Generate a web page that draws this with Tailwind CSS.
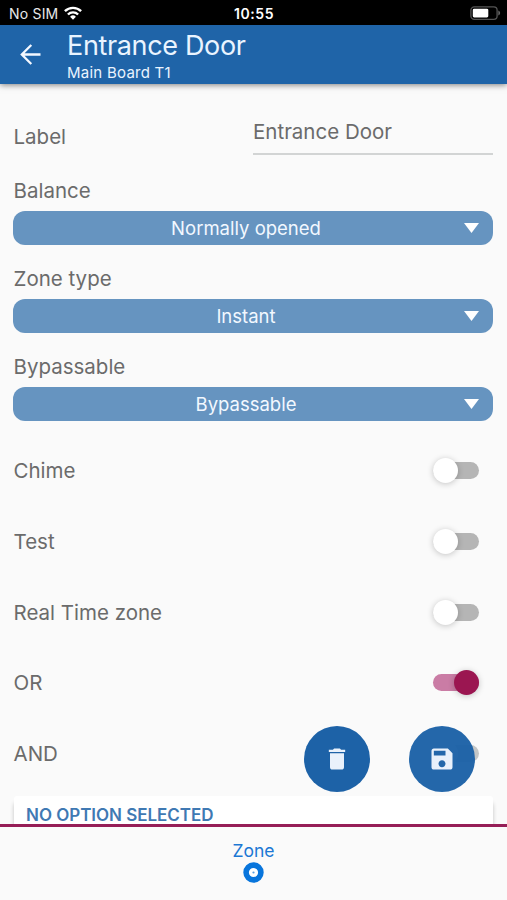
<!DOCTYPE html>
<html lang="en">
<head>
<meta charset="utf-8">
<meta name="viewport" content="width=device-width, initial-scale=1">
<title>Entrance Door</title>
<script src="https://cdn.jsdelivr.net/npm/@tailwindcss/browser@4"></script>
</head>
<body class="bg-[#fafafa] font-[Inter,'Liberation_Sans',sans-serif] text-[#6b6b6b]">
<div class="relative flex h-[900px] w-[507px] flex-col overflow-hidden">
  <div class="grid h-[25px] shrink-0 grid-cols-3 items-center bg-black pt-[3px] text-[14px] leading-none text-[#e8e8e8]">
    <div class="flex items-center gap-[6px] pl-[9px]">
      <span class="whitespace-nowrap tracking-[0.2px]">No SIM</span>
      <svg class="-mt-[2px] h-[14px] w-[18px]" viewBox="0 0 18 14" fill="none" stroke="#fff" stroke-width="2.4"><path d="M.9 5.2a11.6 11.6 0 0 1 16.2 0M3.9 8.5a7.3 7.3 0 0 1 10.2 0"/><path d="M9 13.7 6.1 10.8a4.1 4.1 0 0 1 5.8 0Z" fill="#fff" stroke="none"/></svg>
    </div>
    <div class="pl-px text-center font-semibold tracking-[0.6px] text-white">10:55</div>
    <div class="flex justify-end pr-[6px]">
      <svg class="-mt-[2px] h-[14px] w-[31px]" viewBox="0 0 31 14"><rect x=".9" y=".9" width="26.2" height="12.4" rx="3.4" fill="none" stroke="#555" stroke-width="1.3"/><rect x="2.8" y="2.700" width="15.5" height="8.8" rx="1.4" fill="#fff"/><path d="M28.3 4.6c2.4.7 2.4 4.3 0 5Z" fill="#666"/></svg>
    </div>
  </div>

  <header class="z-10 flex h-[59px] shrink-0 bg-[#1f64a8] text-[#eaf4ff] shadow-[0_1px_6px_rgba(0,0,0,0.5)]">
    <div class="w-[67px] pt-[19px] pl-[20px]">
      <svg class="h-[21px] w-[21px]" viewBox="0 0 21 21" fill="none" stroke="#f4f8ff" stroke-width="2.3"><path d="M20.5 10.5H2M11.3 1 1.8 10.5l9.5 9.5"/></svg>
    </div>
    <div class="pt-[5px]">
      <h1 class="text-[27px] leading-[32px] tracking-[-0.35px]">Entrance Door</h1>
      <p class="pt-px text-[15px] leading-[20px] tracking-[0.25px]">Main Board T1</p>
    </div>
  </header>

  <main class="min-h-0 flex-1 overflow-hidden px-[14px] text-[20.5px] leading-[30px]">
    <div class="flex h-[85px] pt-[32px]">
      <div class="-ml-[0.5px] w-[239.5px] pt-[6px]">Label</div>
      <div class="h-[39px] flex-1 border-b-2 border-[#d2d4d4] pt-px">Entrance Door</div>
    </div>

    <div class="h-[88px]">
      <div class="-ml-[0.5px] h-[42px] pt-[7px]">Balance</div>
      <div class="-ml-px flex h-[34px] items-center rounded-[12px] bg-[#6694c0] pr-[14px] pl-[15px] text-[18.5px] text-[#f2f8ff]"><span class="flex-1 pb-px text-center">Normally opened</span><svg class="h-[10px] w-[15px]" viewBox="0 0 15 10"><path d="M0 0h15L7.5 10Z" fill="#fff"/></svg></div>
    </div>
    <div class="h-[88px]">
      <div class="-ml-[0.5px] h-[42px] pt-[7px]">Zone type</div>
      <div class="-ml-px flex h-[34px] items-center rounded-[12px] bg-[#6694c0] pr-[14px] pl-[15px] text-[18.5px] text-[#f2f8ff]"><span class="flex-1 pb-px text-center">Instant</span><svg class="h-[10px] w-[15px]" viewBox="0 0 15 10"><path d="M0 0h15L7.5 10Z" fill="#fff"/></svg></div>
    </div>
    <div class="h-[88px]">
      <div class="-ml-[0.5px] h-[42px] pt-[7px]">Bypassable</div>
      <div class="-ml-px flex h-[34px] items-center rounded-[12px] bg-[#6694c0] pr-[14px] pl-[15px] text-[18.5px] text-[#f2f8ff]"><span class="flex-1 pb-px text-center">Bypassable</span><svg class="h-[10px] w-[15px]" viewBox="0 0 15 10"><path d="M0 0h15L7.5 10Z" fill="#fff"/></svg></div>
    </div>

    <div class="mt-[1.5px] flex h-[71px] items-center justify-between pr-[14px]">
      <span class="-ml-[0.5px] pt-px">Chime</span>
      <div class="flex h-[17px] w-[46px] items-center rounded-full bg-[#b5b5b5]"><div class="h-[25px] w-[25px] shrink-0 rounded-full bg-white shadow-[0_1px_6px_rgba(0,0,0,0.22)]"></div></div>
    </div>
    <div class="flex h-[71px] items-center justify-between pr-[14px]">
      <span class="-ml-[0.5px] pt-px">Test</span>
      <div class="flex h-[17px] w-[46px] items-center rounded-full bg-[#b5b5b5]"><div class="h-[25px] w-[25px] shrink-0 rounded-full bg-white shadow-[0_1px_6px_rgba(0,0,0,0.22)]"></div></div>
    </div>
    <div class="flex h-[71px] items-center justify-between pr-[14px]">
      <span class="-ml-[0.5px] pt-px">Real Time zone</span>
      <div class="flex h-[17px] w-[46px] items-center rounded-full bg-[#b5b5b5]"><div class="h-[25px] w-[25px] shrink-0 rounded-full bg-white shadow-[0_1px_6px_rgba(0,0,0,0.22)]"></div></div>
    </div>
    <div class="flex h-[70.5px] items-center justify-between pr-[14px]">
      <span class="-ml-[0.5px]">OR</span>
      <div class="flex h-[17px] w-[46px] items-center justify-end rounded-full bg-[#ca7ca5]"><div class="h-[25px] w-[25px] shrink-0 rounded-full bg-[#9b1651] shadow-[0_1px_6px_rgba(0,0,0,0.22)]"></div></div>
    </div>
    <div class="flex h-[71px] items-center justify-between pr-[14px]">
      <span class="-ml-[0.5px]">AND</span>
      <div class="flex h-[17px] w-[46px] items-center rounded-full bg-[#c4c6c6]"><div class="h-[25px] w-[25px] shrink-0 rounded-full bg-white"></div></div>
    </div>
    <div class="mt-[7px] h-[40px] rounded-[3px] bg-white pt-[4px] pl-[12px] text-[17px] font-semibold tracking-[-0.03px] text-[#3f79b3] shadow-[0_7px_4px_rgba(0,0,0,0.22)]">NO OPTION SELECTED</div>
  </main>

  <footer class="z-10 flex h-[76px] shrink-0 flex-col items-center border-t-[3px] border-[#961e57] bg-[#fafafa] pt-[11px] text-[17.5px] leading-[25px] text-[#1c78d4]">
    <span>Zone</span>
    <svg class="-mt-px h-[21px] w-[21px]" viewBox="0 0 21 21"><circle cx="10.5" cy="10.5" r="7.4" fill="#fff" stroke="#0875dc" stroke-width="5.6"/><circle cx="10.5" cy="10.5" r="1.1" fill="#5a9fe2"/></svg>
  </footer>

  <button class="absolute top-[726px] left-[304px] flex h-[66px] w-[66px] items-center justify-center rounded-full bg-[#1d62a7]" aria-label="Delete">
    <svg class="h-[28px] w-[28px]" viewBox="0 0 24 24" fill="#e9f1fb"><path d="M6 19c0 1.100.9 2 2 2h8c1.100 0 2-.9 2-2V7H6v12zM19 4h-3.500l-1-1h-5l-1 1H5v2h14V4z"/></svg>
  </button>
  <button class="absolute top-[726px] left-[409px] flex h-[66px] w-[66px] items-center justify-center rounded-full bg-[#1d62a7]/97" aria-label="Save">
    <svg class="h-[28px] w-[28px]" viewBox="0 0 24 24" fill="#e9f1fb"><path d="M17 3H5c-1.110 0-2 .9-2 2v14c0 1.100.89 2 2 2h14c1.100 0 2-.9 2-2V7l-4-4zm-5 16c-1.660 0-3-1.340-3-3s1.340-3 3-3 3 1.340 3 3-1.340 3-3 3zm3-10H5V5h10v4z"/></svg>
  </button>
</div>
</body>
</html>
